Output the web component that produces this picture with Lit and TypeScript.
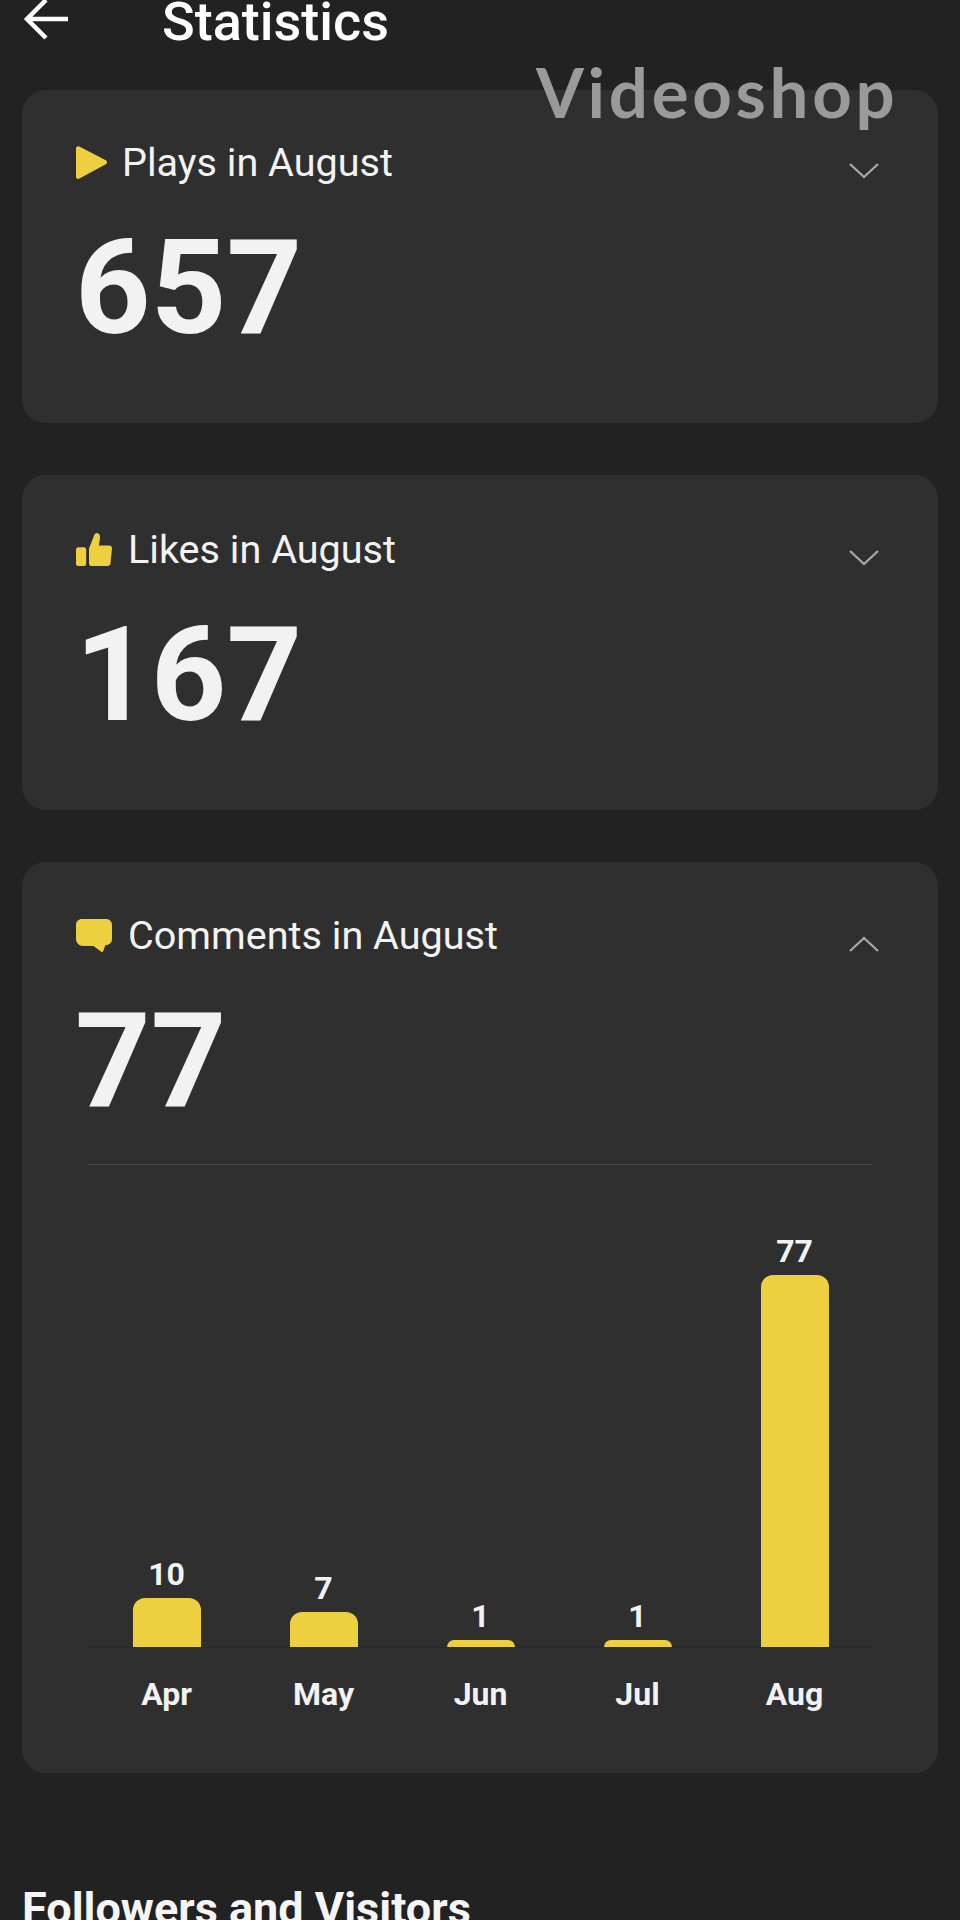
import { LitElement, html, css, svg } from "lit";
import { customElement } from "lit/decorators.js";

const bars = [
  { m: "Apr", v: 10, h: 49 },
  { m: "May", v: 7, h: 35 },
  { m: "Jun", v: 1, h: 7 },
  { m: "Jul", v: 1, h: 7 },
  { m: "Aug", v: 77, h: 372 },
];

const playIcon = svg`<path d="M0 2.500C0 .6 1.600 -.4 3.300 .5L29.800 14.200C31.500 15.100 31.500 17.300 29.800 18.200L3.500 32.500C1.700 33.500 0 32.500 0 30.500Z" fill="#edcf40"/>`;
const thumbIcon = svg`<path d="M0 16.500C0 15.200 1 14.200 2.300 14.200H8C9.200 14.200 10.200 15.200 10.200 16.500V30.700C10.200 32 9.200 33 8 33H2.300C1 33 0 32 0 30.700Z" fill="#edcf40"/><path d="M13 15.500 18 2.800C18.600 1 19.500 0 20.800 0 22.800 0 24 2 24 4.200 24 7 23.300 9.500 23 12.500H33.200C35 12.500 36 13.700 36 15.500L34.500 30.500C34.300 32 33 33 31.500 33H15.500C14 33 13 32 13 30.500Z" fill="#edcf40"/>`;
const commentIcon = svg`<path d="M6 0H30C33.500 0 36 2.500 36 6V20C36 23.500 33.500 26 30 26H29.500L27 32.500C26.700 33.300 26 33.300 25.300 32.800L17.500 27H7C3 27 0 23.500 0 20V6C0 2.500 2.500 0 6 0Z" fill="#edcf40"/>`;

@customElement("app-root")
export class AppRoot extends LitElement {
  static styles = css`
    :host {
      display: block;
      position: relative;
      height: 1920px;
      overflow: hidden;
      background: #222222;
      font-family: Roboto, "Liberation Sans", sans-serif;
      color: #f2f2f2;
    }
    .page {
      display: flex;
      flex-direction: column;
      padding: 0 22px;
      margin-top: -10px;
    }
    .header {
      display: flex;
      align-items: center;
      height: 60px;
      margin-bottom: 40px;
      color: #fff;
    }
    .back {
      width: 46px;
      height: 44px;
      margin-right: 94px;
      flex: none;
    }
    .title {
      font-size: 54px;
      font-weight: 500;
      line-height: 60px;
      padding-top: 4px;
    }
    .card {
      background: #2f2f2f;
      border-radius: 24px;
      padding: 51px 58px 60px 54px;
      margin-bottom: 52px;
    }
    .card.second {
      padding-top: 53px;
    }
    .card.open {
      padding: 52px 0 0;
      height: 911px;
      box-sizing: border-box;
    }
    .head {
      display: flex;
      align-items: center;
      height: 44px;
    }
    .open .head {
      margin-left: 54px;
      margin-right: 58px;
    }
    .ico {
      flex: none;
      margin-right: 16px;
    }
    .ico.play {
      margin-right: 14px;
    }
    .label {
      flex: 1;
      font-size: 39.6px;
      line-height: 44px;
      font-weight: 400;
      color: #f3f3f3;
    }
    .chev {
      flex: none;
      margin-top: 16px;
    }
    .value {
      font-size: 132px;
      line-height: 150px;
      font-weight: 700;
      margin: 28px 0 0 -1px;
      color: #f2f2f2;
    }
    .open .value {
      margin-left: 53px;
    }
    .divider {
      height: 1px;
      background: #484848;
      margin: 28px 66px 0;
    }
    .chart {
      display: grid;
      grid-template-columns: repeat(5, 1fr);
      margin: 0 65px 0 66px;
      height: 482px;
      border-bottom: 1px solid #2a2a2a;
    }
    .col {
      display: flex;
      flex-direction: column;
      align-items: center;
      justify-content: flex-end;
    }
    .num {
      font-size: 32px;
      line-height: 36px;
      font-weight: 700;
      margin-bottom: 6px;
      color: #f2f2f2;
    }
    .bar {
      width: 68px;
      background: #edcf40;
      border-radius: 12px 12px 0 0;
    }
    .months {
      display: grid;
      grid-template-columns: repeat(5, 1fr);
      margin: 28px 65px 0 66px;
    }
    .month {
      text-align: center;
      font-size: 32px;
      line-height: 36px;
      font-weight: 700;
      color: #f2f2f2;
    }
    .section {
      font-size: 45px;
      line-height: 54px;
      font-weight: 700;
      margin-top: 57px;
      color: #f5f5f5;
    }
    .mark {
      position: absolute;
      left: 536px;
      top: 50px;
      font-family: Lato, "Liberation Sans", sans-serif;
      font-size: 69px;
      line-height: 84px;
      font-weight: 700;
      letter-spacing: 3.7px;
      color: #9a9a9a;
      white-space: nowrap;
    }
  `;

  private chevron(up: boolean) {
    return html`<svg class="chev" width="32" height="18" viewBox="0 0 32 18" fill="none" stroke="#a9a9a9" stroke-width="2.2">
      <path d=${up ? "M2 16 16 3 30 16" : "M2 2 16 15 30 2"} />
    </svg>`;
  }

  private head(icon: unknown, w: number, label: string, up: boolean, cls = "") {
    return html`<div class="head">
      <svg class="ico ${cls}" width=${w} height="34" viewBox="0 0 ${w} 34">${icon}</svg>
      <span class="label">${label}</span>
      ${this.chevron(up)}
    </div>`;
  }

  render() {
    return html`
      <div class="page">
        <div class="header">
          <svg class="back" viewBox="0 0 46 44" fill="none" stroke="#fff" stroke-width="4.500">
            <path d="M46 21H5M24 2 5 21 24 40" />
          </svg>
          <span class="title">Statistics</span>
        </div>

        <div class="card">
          ${this.head(playIcon, 32, "Plays in August", false, "play")}
          <div class="value">657</div>
        </div>
        <div class="card second">
          ${this.head(thumbIcon, 36, "Likes in August", false)}
          <div class="value">167</div>
        </div>
        <div class="card open">
          ${this.head(commentIcon, 36, "Comments in August", true)}
          <div class="value">77</div>
          <div class="divider"></div>
          <div class="chart">
            ${bars.map(
              (b) => html`<div class="col">
                <span class="num">${b.v}</span>
                <div class="bar" style="height:${b.h}px"></div>
              </div>`
            )}
          </div>
          <div class="months">
            ${bars.map((b) => html`<span class="month">${b.m}</span>`)}
          </div>
        </div>

        <div class="section">Followers and Visitors</div>
      </div>
      <div class="mark">Videoshop</div>
    `;
  }
}
